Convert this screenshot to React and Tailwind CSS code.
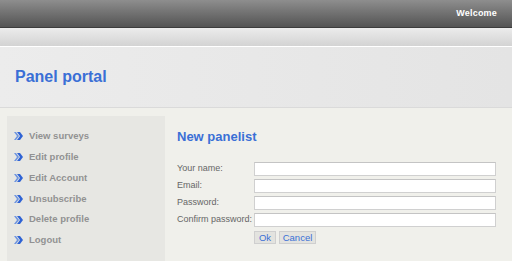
import { useState } from "react";

const menu = ["View surveys", "Edit profile", "Edit Account", "Unsubscribe", "Delete profile", "Logout"];
const fields = ["Your name:", "Email:", "Password:", "Confirm password:"];

function Chevrons() {
  return (
    <svg width="9" height="8" viewBox="0 0 9 8" className="shrink-0">
      <polygon points="0,0 2,0 5,4 2,8 0,8 3,4" fill="#6f95e0" />
      <polygon points="3,0 6,0 9,4 6,8 3,8 6,4" fill="#2f63d4" />
    </svg>
  );
}

export default function App() {
  const [values, setValues] = useState({});

  return (
    <div className="w-[512px] h-[261px] overflow-hidden bg-[#f0f0eb] font-['Liberation_Sans',Arial,sans-serif]">
      <div className="h-[28px] bg-gradient-to-b from-[#8e8e8e] to-[#545454] border-b border-[#3c3c3c] flex items-center justify-end pr-[15px]">
        <span className="text-white font-bold text-[9px] tracking-[0.2px]">Welcome</span>
      </div>
      <div className="h-[19px] bg-gradient-to-b from-[#ececec] to-[#d3d3d3] border-b border-white" />
      <div className="h-[61px] bg-gradient-to-r from-[#ececec] to-[#e4e4e4] border-b border-[#dadada] flex items-center pl-[15px]">
        <h1 className="text-[16px] font-bold text-[#3a6fd6] leading-none mt-[-1px]">Panel portal</h1>
      </div>
      <div className="flex pt-[8px]">
        <div className="ml-[7px] w-[158px] h-[150px] bg-[#e7e7e3] pt-[10px] pl-[7px] flex flex-col">
          {menu.map((m) => (
            <div key={m} className="h-[20.8px] flex items-center gap-[6px]">
              <Chevrons />
              <span className="text-[9.5px] font-bold text-[#929292]">{m}</span>
            </div>
          ))}
        </div>
        <div className="ml-[12px] pt-[13px]">
          <h2 className="text-[13px] font-bold text-[#3a6fd6] leading-[16px]">New panelist</h2>
          <div className="mt-[17px] grid grid-cols-[77px_242px] gap-y-[3px] items-center">
            {fields.map((f) => (
              <div key={f} className="contents">
                <label className="text-[9px] text-[#666] whitespace-nowrap">{f}</label>
                <input
                  type={f.includes("assword") ? "password" : "text"}
                  value={values[f] || ""}
                  onChange={(e) => setValues({ ...values, [f]: e.target.value })}
                  className="h-[14px] bg-white border border-[#d0d0d0] border-t-[#c4c4c4] outline-none text-[9px] px-1"
                />
              </div>
            ))}
            <div />
            <div className="flex gap-[3px] mt-[1px]">
              <button className="h-[13px] w-[22px] bg-[#e3e3df] border border-[#cfcfcf] text-[9.5px] text-[#3a6fd6] leading-none">Ok</button>
              <button className="h-[13px] w-[37px] bg-[#e3e3df] border border-[#cfcfcf] text-[9.5px] text-[#3a6fd6] leading-none">Cancel</button>
            </div>
          </div>
        </div>
      </div>
    </div>
  );
}
